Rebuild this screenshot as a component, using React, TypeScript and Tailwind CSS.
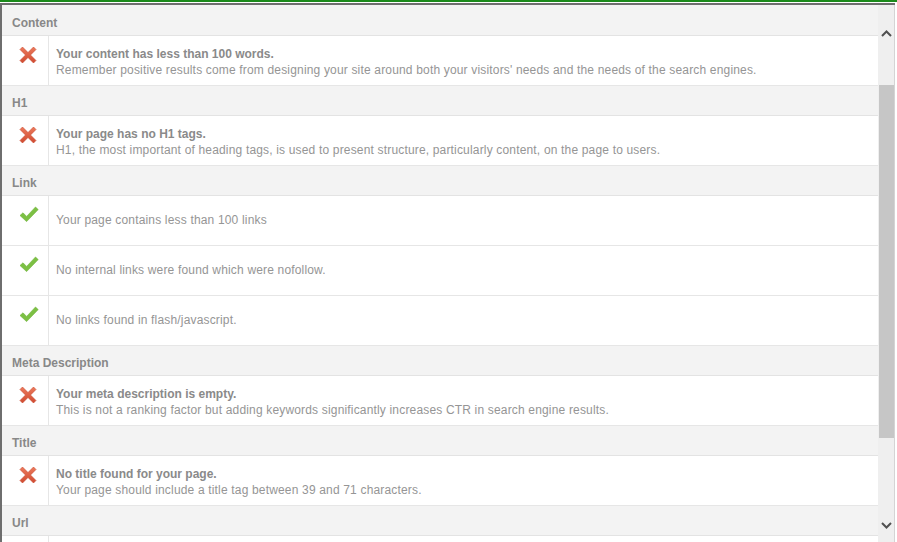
type Item = { ok: boolean; title?: string; text: string };
type Section = { name: string; items: Item[] };

const sections: Section[] = [
  {
    name: "Content",
    items: [
      {
        ok: false,
        title: "Your content has less than 100 words.",
        text: "Remember positive results come from designing your site around both your visitors' needs and the needs of the search engines.",
      },
    ],
  },
  {
    name: "H1",
    items: [
      {
        ok: false,
        title: "Your page has no H1 tags.",
        text: "H1, the most important of heading tags, is used to present structure, particularly content, on the page to users.",
      },
    ],
  },
  {
    name: "Link",
    items: [
      { ok: true, text: "Your page contains less than 100 links" },
      { ok: true, text: "No internal links were found which were nofollow." },
      { ok: true, text: "No links found in flash/javascript." },
    ],
  },
  {
    name: "Meta Description",
    items: [
      {
        ok: false,
        title: "Your meta description is empty.",
        text: "This is not a ranking factor but adding keywords significantly increases CTR in search engine results.",
      },
    ],
  },
  {
    name: "Title",
    items: [
      {
        ok: false,
        title: "No title found for your page.",
        text: "Your page should include a title tag between 39 and 71 characters.",
      },
    ],
  },
  {
    name: "Url",
    items: [{ ok: true, text: "Your url is short." }],
  },
];

function CrossIcon() {
  return (
    <svg width="18" height="18" viewBox="0 0 18 18">
      <defs>
        <linearGradient id="xg" x1="0" y1="0" x2="0" y2="1">
          <stop offset="0" stopColor="#ec7a5c" />
          <stop offset="1" stopColor="#cf4a30" />
        </linearGradient>
      </defs>
      <path
        d="M3.5 1 L9 6.5 L14.5 1 L17 3.5 L11.5 9 L17 14.5 L14.5 17 L9 11.5 L3.5 17 L1 14.5 L6.5 9 L1 3.5 Z"
        fill="url(#xg)"
        stroke="#c9462d"
        strokeWidth="0.6"
        strokeLinejoin="round"
      />
    </svg>
  );
}

function CheckIcon() {
  return (
    <svg width="20" height="18" viewBox="0 0 20 18">
      <path
        d="M1 9.5 L4 6.8 L7.6 10.4 L16.5 1 L19.2 3.6 L7.6 15.6 Z"
        fill="#7cc043"
        stroke="#6bb035"
        strokeWidth="0.6"
        strokeLinejoin="round"
      />
    </svg>
  );
}

function Row({ item }: { item: Item }) {
  return (
    <div className="flex h-[50px] shrink-0 border-b border-[#e6e6e6] bg-white">
      <div className="w-[47px] shrink-0 border-r border-[#e6e6e6] pl-[17px] pt-[10px]">
        {item.ok ? <CheckIcon /> : <CrossIcon />}
      </div>
      <div
        className={`pl-[7px] flex flex-col text-[12px] leading-[16px] ${
          item.title ? "pt-[10px]" : "justify-center pb-px"
        }`}
      >
        {item.title && (
          <div className="font-bold text-[#8a8a8a]">{item.title}</div>
        )}
        <div className="text-[#959595] tracking-[0.17px]">{item.text}</div>
      </div>
    </div>
  );
}

export default function App() {
  return (
    <div
      className="w-[897px] h-[542px] bg-white overflow-hidden flex flex-col"
      style={{ fontFamily: "Arial, 'Liberation Sans', sans-serif" }}
    >
      <div className="h-[2px] bg-[#1b8a1b] shrink-0" />
      <div className="h-px shrink-0" />
      <div className="flex-1 min-h-0 flex border-t-2 border-l-2 border-[#6e6e6e] mr-[2px] overflow-hidden">
        <div className="flex-1 min-w-0 overflow-hidden">
          <div className="h-px bg-[#f3f3f3]" />
          {sections.map((s) => (
            <div key={s.name}>
              <div className="h-[30px] bg-[#f3f3f3] border-b border-[#e3e3e3] pl-[10px] pt-[10px] text-[12px] leading-[15px] font-bold text-[#888888]">
                {s.name}
              </div>
              {s.items.map((it, i) => (
                <Row key={i} item={it} />
              ))}
            </div>
          ))}
        </div>
        <div className="w-[17px] shrink-0 bg-[#efefef] border-r border-[#d4d4d4] flex flex-col items-center">
          <div className="h-[34px] flex items-end justify-center pb-[2px]">
            <svg width="11" height="7" viewBox="0 0 11 7">
              <path d="M1 6 L5.5 1.5 L10 6" fill="none" stroke="#505050" strokeWidth="2" />
            </svg>
          </div>
          <div className="mt-[46px] h-[353px] w-[15px] bg-[#c6c6c6]" />
          <div className="flex-1" />
          <div className="h-[26px] flex items-start justify-center pt-[6px]">
            <svg width="11" height="7" viewBox="0 0 11 7">
              <path d="M1 1 L5.5 5.5 L10 1" fill="none" stroke="#505050" strokeWidth="2" />
            </svg>
          </div>
        </div>
      </div>
    </div>
  );
}
